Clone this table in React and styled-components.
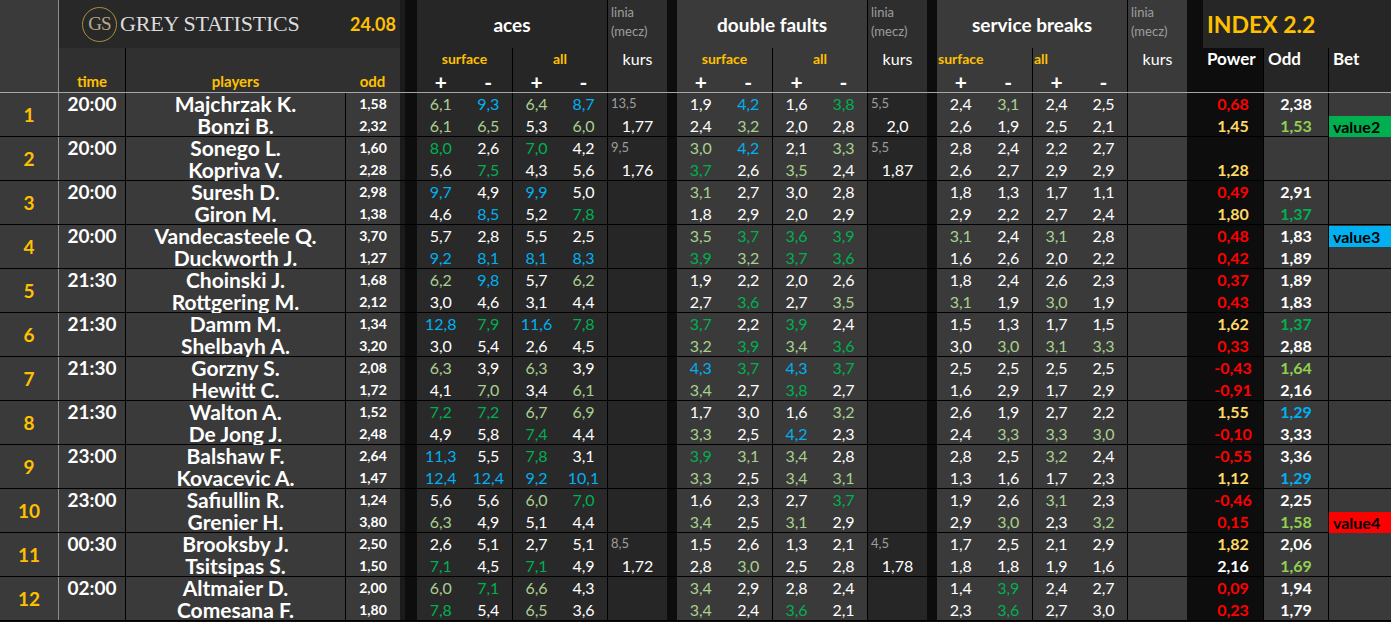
import React from "react";
import styled, { createGlobalStyle } from "styled-components";

const GlobalStyle = createGlobalStyle`
  * { box-sizing: border-box; }
  html, body { margin: 0; padding: 0; background: #0d0d0d; overflow: hidden; }
  body { font-family: Lato, "Open Sans", sans-serif; }
`;

const COLORS = {
  w: "#ffffff",
  l: "#a9d08e",
  L: "#92d050",
  g: "#00b050",
  b: "#00b0f0",
  r: "#ff0000",
  y: "#ffd966",
};

const GOLD = "#ffc000";
const LINE = "#000";

const parse = (s) =>
  s.split(" ").map((t) => {
    const m = t.match(/^(.*?)([lLgbry]?)$/);
    return { v: m[1] === "_" ? "" : m[1], c: COLORS[m[2] || "w"] };
  });

const matches = [
  { n: 1, time: "20:00", p: ["Majchrzak K.", "Bonzi B."], o: ["1,58", "2,32"],
    aces: "6,1l 9,3b 6,4l 8,7b/6,1l 6,5l 5,3 6,0l", aL: ["13,5", "1,77"],
    df: "1,9 4,2b 1,6 3,8g/2,4 3,2l 2,0 2,8", dL: ["5,5", "2,0"],
    sb: "2,4 3,1l 2,4 2,5/2,6 1,9 2,5 2,1",
    pw: "0,68r 1,45y", io: "2,38 1,53L", bet: [null, ["value2", "#00b050"]] },
  { n: 2, time: "20:00", p: ["Sonego L.", "Kopriva V."], o: ["1,60", "2,28"],
    aces: "8,0g 2,6 7,0g 4,2/5,6 7,5g 4,3 5,6", aL: ["9,5", "1,76"],
    df: "3,0l 4,2b 2,1 3,3l/3,7g 2,6 3,5l 2,4", dL: ["5,5", "1,87"],
    sb: "2,8 2,4 2,2 2,7/2,6 2,7 2,9 2,9",
    pw: "_ 1,28y", io: "_ _" },
  { n: 3, time: "20:00", p: ["Suresh D.", "Giron M."], o: ["2,98", "1,38"],
    aces: "9,7b 4,9 9,9b 5,0/4,6 8,5b 5,2 7,8g",
    df: "3,1l 2,7 3,0 2,8/1,8 2,9 2,0 2,9",
    sb: "1,8 1,3 1,7 1,1/2,9 2,2 2,7 2,4",
    pw: "0,49r 1,80y", io: "2,91 1,37g" },
  { n: 4, time: "20:00", p: ["Vandecasteele Q.", "Duckworth J."], o: ["3,70", "1,27"],
    aces: "5,7 2,8 5,5 2,5/9,2b 8,1b 8,1b 8,3b",
    df: "3,5l 3,7g 3,6g 3,9g/3,9g 3,2l 3,7g 3,6g",
    sb: "3,1l 2,4 3,1l 2,8/1,6 2,6 2,0 2,2",
    pw: "0,48r 0,42r", io: "1,83 1,89", bet: [["value3", "#00b0f0"], null] },
  { n: 5, time: "21:30", p: ["Choinski J.", "Rottgering M."], o: ["1,68", "2,12"],
    aces: "6,2l 9,8b 5,7 6,2l/3,0 4,6 3,1 4,4",
    df: "1,9 2,2 2,0 2,6/2,7 3,6g 2,7 3,5l",
    sb: "1,8 2,4 2,6 2,3/3,1l 1,9 3,0l 1,9",
    pw: "0,37r 0,43r", io: "1,89 1,83" },
  { n: 6, time: "21:30", p: ["Damm M.", "Shelbayh A."], o: ["1,34", "3,20"],
    aces: "12,8b 7,9g 11,6b 7,8g/3,0 5,4 2,6 4,5",
    df: "3,7g 2,2 3,9g 2,4/3,2l 3,9g 3,4l 3,6g",
    sb: "1,5 1,3 1,7 1,5/3,0 3,0l 3,1l 3,3l",
    pw: "1,62y 0,33r", io: "1,37g 2,88" },
  { n: 7, time: "21:30", p: ["Gorzny S.", "Hewitt C."], o: ["2,08", "1,72"],
    aces: "6,3l 3,9 6,3l 3,9/4,1 7,0l 3,4 6,1l",
    df: "4,3b 3,7g 4,3b 3,7g/3,4l 2,7 3,8g 2,7",
    sb: "2,5 2,5 2,5 2,5/1,6 2,9 1,7 2,9",
    pw: "-0,43r -0,91r", io: "1,64L 2,16" },
  { n: 8, time: "21:30", p: ["Walton A.", "De Jong J."], o: ["1,52", "2,48"],
    aces: "7,2g 7,2g 6,7l 6,9l/4,9 5,8 7,4g 4,4",
    df: "1,7 3,0 1,6 3,2l/3,3l 2,5 4,2b 2,3",
    sb: "2,6 1,9 2,7 2,2/2,4 3,3l 3,3l 3,0l",
    pw: "1,55y -0,10r", io: "1,29b 3,33" },
  { n: 9, time: "23:00", p: ["Balshaw F.", "Kovacevic A."], o: ["2,64", "1,47"],
    aces: "11,3b 5,5 7,8g 3,1/12,4b 12,4b 9,2b 10,1b",
    df: "3,9g 3,1l 3,4l 2,8/3,3l 2,5 3,4l 3,1l",
    sb: "2,8 2,5 3,2l 2,4/1,3 1,6 1,7 2,3",
    pw: "-0,55r 1,12y", io: "3,36 1,29b" },
  { n: 10, time: "23:00", p: ["Safiullin R.", "Grenier H."], o: ["1,24", "3,80"],
    aces: "5,6 5,6 6,0l 7,0g/6,3l 4,9 5,1 4,4",
    df: "1,6 2,3 2,7 3,7g/3,4l 2,5 3,1l 2,9",
    sb: "1,9 2,6 3,1l 2,3/2,9 3,0l 2,3 3,2l",
    pw: "-0,46r 0,15r", io: "2,25 1,58L", bet: [null, ["value4", "#ff0000"]] },
  { n: 11, time: "00:30", p: ["Brooksby J.", "Tsitsipas S."], o: ["2,50", "1,50"],
    aces: "2,6 5,1 2,7 5,1/7,1g 4,5 7,1g 4,9", aL: ["8,5", "1,72"],
    df: "1,5 2,6 1,3 2,1/2,8 3,0l 2,5 2,8", dL: ["4,5", "1,78"],
    sb: "1,7 2,5 2,1 2,9/1,8 1,8 1,9 1,6",
    pw: "1,82y 2,16", io: "2,06 1,69L" },
  { n: 12, time: "02:00", p: ["Altmaier D.", "Comesana F."], o: ["2,00", "1,80"],
    aces: "6,0l 7,1g 6,6l 4,3/7,8g 5,4 6,5l 3,6",
    df: "3,4l 2,9 2,8 2,4/3,4l 2,4 3,6g 2,1",
    sb: "1,4 3,9g 2,4 2,7/2,3 3,6g 2,7 3,0",
    pw: "0,09r 0,23r", io: "1,94 1,79" },
];

/* ---------- layout ---------- */

const Sheet = styled.div`
  width: 1391px;
  height: 622px;
  overflow: hidden;
  background: #0d0d0d;
`;

const Header = styled.div`
  display: flex;
  height: 93px;
  border-bottom: 1px solid #a6a6a6;
`;

const Sep = styled.div`
  flex: none;
  width: ${(p) => p.$w}px;
  background: #0d0d0d;
  border-left: ${(p) => (p.$edge ? "5px solid #1b1b1b" : "none")};
`;

/* ---------- header parts ---------- */

const IdxHead = styled.div`
  flex: none;
  width: 58px;
  background: #3a3a3a;
`;

const TitleHead = styled.div`
  flex: none;
  width: 342px;
  display: flex;
  flex-direction: column;
  border-left: 1px solid #8c8c8c;
`;

const Brand = styled.div`
  height: 48px;
  display: flex;
  align-items: center;
  background: #282828;
  padding: 0 4px 0 23px;
`;

const Logo = styled.div`
  width: 35px;
  height: 35px;
  border-radius: 50%;
  border: 1.5px solid #b08d3c;
  display: flex;
  align-items: center;
  justify-content: center;
  font-family: "Liberation Serif", serif;
  font-size: 19px;
  color: #b8a98a;
  letter-spacing: -1px;
`;

const BrandName = styled.div`
  margin-left: 3px;
  font-family: "Liberation Serif", serif;
  font-size: 22px;
  letter-spacing: -0.2px;
  color: #dcdcdc;
`;

const DateLabel = styled.div`
  margin-left: auto;
  color: ${GOLD};
  font-weight: 700;
  font-size: 18px;
`;

const SubLabels = styled.div`
  flex: 1;
  display: grid;
  grid-template-columns: 66px 220px 55px;
  background: #303030;
`;

const GoldLabel = styled.div`
  display: flex;
  align-items: flex-end;
  justify-content: center;
  color: ${GOLD};
  font-weight: 700;
  font-size: 15px;
  line-height: 22px;
  border-left: ${(p) => (p.$line ? `1px solid ${LINE}` : "none")};
`;

const StatHead = styled.div`
  flex: none;
  width: 190px;
  display: flex;
  flex-direction: column;
  background: ${(p) => p.$bg};
`;

const SectionTitle = styled.div`
  height: 48px;
  display: flex;
  align-items: center;
  justify-content: center;
  color: #fff;
  font-weight: 700;
  font-size: 19px;
`;

const HeadGroups = styled.div`
  flex: 1;
  display: grid;
  grid-template-columns: 1fr 1fr;
`;

const HeadGroup = styled.div`
  display: grid;
  grid-template-columns: 1fr 1fr;
  grid-template-rows: 22px 22px;
  border-left: ${(p) => (p.$line ? `1px solid ${LINE}` : "none")};
`;

const GroupName = styled.div`
  grid-column: 1 / 3;
  color: ${GOLD};
  font-weight: 700;
  font-size: 14px;
  line-height: 22px;
  text-align: ${(p) => p.$align};
  padding-left: ${(p) => (p.$align === "left" ? "1px" : "0")};
`;

const Sign = styled.div`
  text-align: center;
  color: #fff;
  font-weight: 700;
  font-size: 21px;
  line-height: 24px;
`;

const LiniaHead = styled.div`
  flex: none;
  width: 60px;
  display: flex;
  flex-direction: column;
  background: ${(p) => p.$bg};
  border-left: 1px solid ${LINE};
`;

const LiniaNote = styled.div`
  height: 48px;
  padding: 3px 0 0 3px;
  color: #9e9e9e;
  font-size: 13px;
  line-height: 19px;
`;

const KursLabel = styled.div`
  height: 22px;
  text-align: center;
  color: #fff;
  font-size: 16px;
  line-height: 22px;
`;

const IndexHead = styled.div`
  flex: none;
  width: 188px;
  display: flex;
  flex-direction: column;
  background: #262626;
`;

const IndexTitle = styled.div`
  height: 48px;
  display: flex;
  align-items: center;
  padding-left: 4px;
  color: ${GOLD};
  font-weight: 700;
  font-size: 23px;
`;

const IndexLabels = styled.div`
  flex: 1;
  display: grid;
  grid-template-columns: 60px 65px 63px;
`;

const IndexLabel = styled.div`
  padding-left: 4px;
  color: #fff;
  font-weight: 700;
  font-size: 17px;
  line-height: 22px;
  background: ${(p) => (p.$dark ? "#0d0d0d" : "#262626")};
  border-left: ${(p) => (p.$line ? `1px solid ${LINE}` : "none")};
`;

/* ---------- row parts ---------- */

const MatchRow = styled.div`
  display: flex;
  height: 44px;
  border-bottom: 1px solid ${LINE};
`;

const Cell = styled.div`
  flex: none;
  width: ${(p) => p.$w}px;
  background: ${(p) => p.$bg || "#3a3a3a"};
  border-left: ${(p) => (p.$bl ? `1px solid ${p.$bl}` : "none")};
`;

const Number = styled(Cell)`
  display: flex;
  align-items: center;
  justify-content: center;
  color: ${GOLD};
  font-weight: 700;
  font-size: 19px;
`;

const BigText = styled.div`
  text-align: center;
  color: #fff;
  font-weight: 700;
  font-size: ${(p) => p.$size || 19}px;
  line-height: 22px;
  white-space: nowrap;
`;

const OddText = styled.div`
  text-align: center;
  color: #fff;
  font-weight: 700;
  font-size: 14px;
  line-height: 22px;
`;

const StatGroups = styled(Cell)`
  display: grid;
  grid-template-columns: 1fr 1fr;
`;

const StatGroup = styled.div`
  display: grid;
  grid-template-columns: 1fr 1fr;
  grid-template-rows: 22px 22px;
  border-left: ${(p) => (p.$line ? `1px solid ${LINE}` : "none")};
`;

const StatValue = styled.div`
  text-align: center;
  color: ${(p) => p.$c};
  font-size: 16px;
  line-height: 22px;
`;

const LineValue = styled.div`
  height: 22px;
  padding: 2px 0 0 3px;
  color: #9e9e9e;
  font-size: 13px;
  line-height: 16px;
`;

const KursValue = styled.div`
  height: 22px;
  text-align: center;
  color: #fff;
  font-size: 16px;
  line-height: 22px;
`;

const BoldValue = styled.div`
  height: 22px;
  text-align: center;
  color: ${(p) => p.$c};
  font-weight: 700;
  font-size: 16px;
  line-height: 22px;
`;

const BetSlot = styled.div`
  height: 22px;
  padding-top: 1px;
`;

const BetTag = styled.div`
  height: 21px;
  padding-left: 4px;
  background: ${(p) => p.$bg};
  color: #000;
  font-weight: 700;
  font-size: 16px;
  line-height: 21px;
`;

/* ---------- components ---------- */

function StatHeader({ title, bg, align }) {
  return (
    <StatHead $bg={bg}>
      <SectionTitle>{title}</SectionTitle>
      <HeadGroups>
        {["surface", "all"].map((g, i) => (
          <HeadGroup key={g} $line={i === 1}>
            <GroupName $align={align}>{g}</GroupName>
            <Sign>+</Sign>
            <Sign>-</Sign>
          </HeadGroup>
        ))}
      </HeadGroups>
    </StatHead>
  );
}

function Linia({ bg }) {
  return (
    <LiniaHead $bg={bg}>
      <LiniaNote>
        linia
        <br />
        (mecz)
      </LiniaNote>
      <KursLabel>kurs</KursLabel>
    </LiniaHead>
  );
}

function Stats({ data, bg }) {
  const rows = data.split("/").map(parse);
  return (
    <StatGroups $w={190} $bg={bg}>
      {[0, 2].map((off) => (
        <StatGroup key={off} $line={off === 2}>
          {rows.map((r, ri) =>
            r.slice(off, off + 2).map((t, i) => (
              <StatValue key={`${ri}-${i}`} $c={t.c}>
                {t.v}
              </StatValue>
            ))
          )}
        </StatGroup>
      ))}
    </StatGroups>
  );
}

function LiniaCell({ data, bg }) {
  return (
    <Cell $w={60} $bg={bg} $bl={LINE}>
      <LineValue>{data ? data[0] : ""}</LineValue>
      <KursValue>{data ? data[1] : ""}</KursValue>
    </Cell>
  );
}

function Match({ m }) {
  const pw = parse(m.pw);
  const io = parse(m.io);
  const bet = m.bet || [null, null];
  return (
    <MatchRow>
      <Number $w={58}>{m.n}</Number>
      <Cell $w={67} $bl="#8c8c8c">
        <BigText>{m.time}</BigText>
      </Cell>
      <Cell $w={220} $bl={LINE}>
        <BigText $size={21}>{m.p[0]}</BigText>
        <BigText $size={21}>{m.p[1]}</BigText>
      </Cell>
      <Cell $w={55} $bl={LINE}>
        <OddText>{m.o[0]}</OddText>
        <OddText>{m.o[1]}</OddText>
      </Cell>
      <Sep $w={17} $edge />
      <Stats data={m.aces} bg="#292929" />
      <LiniaCell data={m.aL} bg="#262626" />
      <Sep $w={10} />
      <Stats data={m.df} bg="#3a3a3a" />
      <LiniaCell data={m.dL} bg="#262626" />
      <Sep $w={10} />
      <Stats data={m.sb} bg="#3a3a3a" />
      <LiniaCell bg="#3d3d3d" />
      <Sep $w={16} />
      <Cell $w={60} $bg="#0d0d0d">
        {pw.map((t, i) => (
          <BoldValue key={i} $c={t.c}>
            {t.v}
          </BoldValue>
        ))}
      </Cell>
      <Cell $w={65} $bl={LINE}>
        {io.map((t, i) => (
          <BoldValue key={i} $c={t.c}>
            {t.v}
          </BoldValue>
        ))}
      </Cell>
      <Cell $w={63} $bl={LINE}>
        {bet.map((b, i) => (
          <BetSlot key={i}>{b && <BetTag $bg={b[1]}>{b[0]}</BetTag>}</BetSlot>
        ))}
      </Cell>
    </MatchRow>
  );
}

export default function App() {
  return (
    <Sheet>
      <GlobalStyle />
      <Header>
        <IdxHead />
        <TitleHead>
          <Brand>
            <Logo>GS</Logo>
            <BrandName>GREY STATISTICS</BrandName>
            <DateLabel>24.08</DateLabel>
          </Brand>
          <SubLabels>
            <GoldLabel>time</GoldLabel>
            <GoldLabel $line>players</GoldLabel>
            <GoldLabel>odd</GoldLabel>
          </SubLabels>
        </TitleHead>
        <Sep $w={17} $edge />
        <StatHeader title="aces" bg="#262626" align="center" />
        <Linia bg="#2e2e2e" />
        <Sep $w={10} />
        <StatHeader title="double faults" bg="#3a3a3a" align="center" />
        <Linia bg="#2e2e2e" />
        <Sep $w={10} />
        <StatHeader title="service breaks" bg="#3a3a3a" align="left" />
        <Linia bg="#3a3a3a" />
        <Sep $w={16} />
        <IndexHead>
          <IndexTitle>INDEX 2.2</IndexTitle>
          <IndexLabels>
            <IndexLabel $dark>Power</IndexLabel>
            <IndexLabel $line>Odd</IndexLabel>
            <IndexLabel $line>Bet</IndexLabel>
          </IndexLabels>
        </IndexHead>
      </Header>
      {matches.map((m) => (
        <Match key={m.n} m={m} />
      ))}
    </Sheet>
  );
}
